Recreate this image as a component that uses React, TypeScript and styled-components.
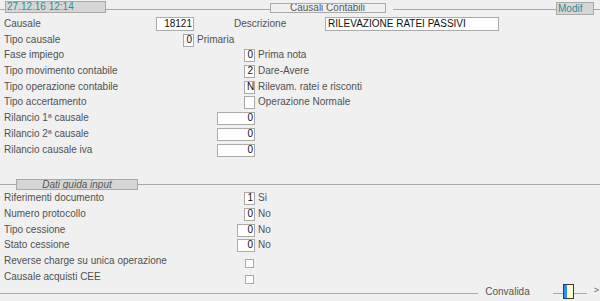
import React from 'react';
import styled, { createGlobalStyle } from 'styled-components';

const GlobalStyle = createGlobalStyle`
  html, body {
    margin: 0;
    padding: 0;
    background: #f0f0f0;
  }
  body {
    font-family: "Liberation Sans", Arial, sans-serif;
    font-size: 10px;
    color: #505050;
  }
  * {
    box-sizing: border-box;
  }
`;

const Screen = styled.div`
  width: 600px;
  height: 301px;
  overflow: hidden;
  display: flex;
  flex-direction: column;
`;

const TopBar = styled.div`
  display: flex;
  align-items: flex-start;
  height: 16px;
  flex: 0 0 16px;
`;

const Rule = styled.div<{ $w?: number; $gap?: number; $top?: number }>`
  height: 1px;
  background: #a8a8a8;
  margin-top: ${(p) => p.$top ?? 9}px;
  margin-left: ${(p) => p.$gap ?? 0}px;
  flex: ${(p) => (p.$w ? `0 0 ${p.$w}px` : '1 1 auto')};
`;

const Tag = styled.div<{
  $w: number;
  $top: number;
  $h: number;
  $fill: string;
  $color: string;
  $align?: string;
  $italic?: boolean;
}>`
  flex: 0 0 ${(p) => p.$w}px;
  margin-top: ${(p) => p.$top}px;
  height: ${(p) => p.$h}px;
  line-height: ${(p) => p.$h - 2}px;
  background: ${(p) => p.$fill};
  color: ${(p) => p.$color};
  border: 1px solid #a8a8a8;
  text-align: ${(p) => p.$align ?? 'left'};
  font-style: ${(p) => (p.$italic ? 'italic' : 'normal')};
  padding-left: ${(p) => (p.$align === 'center' ? 0 : 1)}px;
  white-space: nowrap;
  overflow: hidden;
`;

const Row = styled.div`
  display: flex;
  align-items: flex-start;
  height: 15.7px;
  flex: 0 0 15.7px;
  line-height: 15.7px;
  white-space: nowrap;
`;

const Label = styled.div<{ $w: number }>`
  flex: 0 0 ${(p) => p.$w}px;
  padding-left: 4px;
`;

const Box = styled.div<{ $w: number; $h?: number; $top?: number; $left?: boolean }>`
  flex: 0 0 ${(p) => p.$w}px;
  height: ${(p) => p.$h ?? 13}px;
  margin-top: ${(p) => p.$top ?? 2}px;
  border: 1px solid #a9a9a9;
  background: #ffffff;
  color: #111111;
  line-height: ${(p) => (p.$h ?? 13) - 3}px;
  text-align: ${(p) => (p.$left ? 'left' : 'right')};
  padding: 0 1px 0 2px;
  overflow: hidden;
`;

const Check = styled.div`
  flex: 0 0 9px;
  height: 9px;
  margin-top: 6px;
  border: 1px solid #a9a9a9;
  background: #ffffff;
`;

const Desc = styled.div<{ $gap?: number; $w?: number }>`
  margin-left: ${(p) => p.$gap ?? 3}px;
  ${(p) => (p.$w ? `flex: 0 0 ${p.$w}px;` : '')}
`;

const SectionBar = styled.div`
  display: flex;
  align-items: flex-start;
  height: 11px;
  flex: 0 0 11px;
  margin-top: 22px;
`;

const Footer = styled.div`
  display: flex;
  align-items: flex-start;
  height: 15px;
  flex: 0 0 15px;
  line-height: 15px;
`;

const Confirm = styled.div`
  margin: 0 23px 0 7px;
  color: #555555;
`;

const Toggle = styled.div`
  flex: 0 0 11px;
  height: 15px;
  border: 1px solid #3a3a3a;
  background: #ffffc8;
  &::before {
    content: '';
    display: block;
    width: 3px;
    height: 100%;
    background: #2f8ef0;
  }
`;

const Arrow = styled.div`
  margin: 0 1px 0 7px;
  color: #666666;
  font-size: 9px;
  line-height: 13px;
`;

type Field = {
  label: string;
  end: number;
  w: number;
  value?: string;
  desc?: string;
  check?: boolean;
};

const fieldsTop: Field[] = [
  { label: 'Fase impiego', end: 255, w: 11, value: '0', desc: 'Prima nota' },
  { label: 'Tipo movimento contabile', end: 255, w: 11, value: '2', desc: 'Dare-Avere' },
  { label: 'Tipo operazione contabile', end: 255, w: 11, value: 'N', desc: 'Rilevam. ratei e risconti' },
  { label: 'Tipo accertamento', end: 255, w: 11, value: '', desc: 'Operazione Normale' },
  { label: 'Rilancio 1ª causale', end: 255, w: 38, value: '0' },
  { label: 'Rilancio 2ª causale', end: 255, w: 38, value: '0' },
  { label: 'Rilancio causale iva', end: 255, w: 38, value: '0' },
];

const fieldsInput: Field[] = [
  { label: 'Riferimenti documento', end: 255, w: 11, value: '1', desc: 'Si' },
  { label: 'Numero protocollo', end: 255, w: 11, value: '0', desc: 'No' },
  { label: 'Tipo cessione', end: 255, w: 18, value: '0', desc: 'No' },
  { label: 'Stato cessione', end: 255, w: 18, value: '0', desc: 'No' },
  { label: 'Reverse charge su unica operazione', end: 254, w: 9, check: true },
  { label: 'Causale acquisti CEE', end: 254, w: 9, check: true },
];

const FieldRow = ({ item }: { item: Field }) => (
  <Row>
    <Label $w={item.end - item.w}>{item.label}</Label>
    {item.check ? <Check /> : <Box $w={item.w}>{item.value}</Box>}
    {item.desc && <Desc>{item.desc}</Desc>}
  </Row>
);

export default function App(): JSX.Element {
  return (
    <Screen>
      <GlobalStyle />
      <TopBar>
        <Rule $w={5} />
        <Tag $w={101} $top={1} $h={12} $fill="#d6d6d6" $color="#2f8f98">
          27.12.16 12:14
        </Tag>
        <Rule />
        <Tag $w={116} $top={3} $h={10} $fill="#f0f0f0" $color="#555555" $align="center">
          Causali Contabili
        </Tag>
        <Rule $gap={7} />
        <Tag $w={38} $top={2} $h={13} $fill="#d6d6d6" $color="#2f8f98">
          Modif
        </Tag>
        <Rule $w={6} />
      </TopBar>

      <Row>
        <Label $w={156}>Causale</Label>
        <Box $w={38} $h={14} $top={1}>18121</Box>
        <Desc $gap={40} $w={91}>Descrizione</Desc>
        <Box $w={174} $h={14} $top={1} $left>
          RILEVAZIONE RATEI PASSIVI
        </Box>
      </Row>
      <FieldRow item={{ label: 'Tipo causale', end: 194, w: 11, value: '0', desc: 'Primaria' }} />
      {fieldsTop.map((f) => (
        <FieldRow key={f.label} item={f} />
      ))}

      <SectionBar>
        <Rule $w={16} $top={5} />
        <Tag $w={122} $top={0} $h={11} $fill="#d6d6d6" $color="#555555" $align="center" $italic>
          Dati guida input
        </Tag>
        <Rule $top={5} />
      </SectionBar>

      {fieldsInput.map((f) => (
        <FieldRow key={f.label} item={f} />
      ))}

      <Footer>
        <Rule $top={9} />
        <Confirm>Convalida</Confirm>
        <Rule $w={10} $top={9} />
        <Toggle />
        <Rule $w={13} $top={9} />
        <Arrow>&gt;</Arrow>
      </Footer>
    </Screen>
  );
}
